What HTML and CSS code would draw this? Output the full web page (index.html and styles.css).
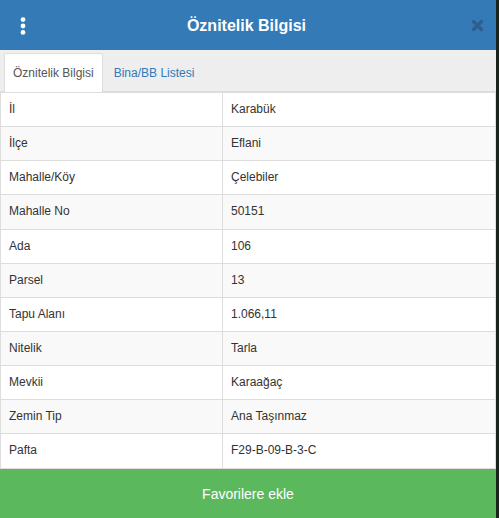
FILE: index.html
```html
<!DOCTYPE html>
<html lang="tr">
<head>
<meta charset="utf-8">
<title>Öznitelik Bilgisi</title>
<link rel="stylesheet" href="styles.css">
</head>
<body>
<div class="panel">
  <div class="header">
    <span class="menu">
      <svg width="8" height="18" viewBox="0 0 8 18"><circle cx="4" cy="2.6" r="2.4" fill="#fff"/><circle cx="4" cy="9" r="2.4" fill="#fff"/><circle cx="4" cy="15.4" r="2.4" fill="#fff"/></svg>
    </span>
    <h4 class="title">Öznitelik Bilgisi</h4>
    <span class="close">
      <svg width="13" height="13" viewBox="0 0 13 13"><path d="M2.5 2.5 L10.5 10.5 M10.5 2.5 L2.5 10.5" stroke="#2d5f8e" stroke-width="3.2" stroke-linecap="round"/></svg>
    </span>
  </div>
  <div class="tabs">
    <div class="tab active">Öznitelik Bilgisi</div>
    <div class="tab">Bina/BB Listesi</div>
  </div>
  <table class="attrs">
    <tbody>
      <tr><td class="key">İl</td><td>Karabük</td></tr>
      <tr><td class="key">İlçe</td><td>Eflani</td></tr>
      <tr><td class="key">Mahalle/Köy</td><td>Çelebiler</td></tr>
      <tr><td class="key">Mahalle No</td><td>50151</td></tr>
      <tr><td class="key">Ada</td><td>106</td></tr>
      <tr><td class="key">Parsel</td><td>13</td></tr>
      <tr><td class="key">Tapu Alanı</td><td>1.066,11</td></tr>
      <tr><td class="key">Nitelik</td><td>Tarla</td></tr>
      <tr><td class="key">Mevkii</td><td>Karaağaç</td></tr>
      <tr><td class="key">Zemin Tip</td><td>Ana Taşınmaz</td></tr>
      <tr><td class="key">Pafta</td><td>F29-B-09-B-3-C</td></tr>
    </tbody>
  </table>
  <button class="fav">Favorilere ekle</button>
</div>
</body>
</html>
```

FILE: styles.css
```css
html, body {
  margin: 0;
  padding: 0;
}
body {
  background: #1b231d;
  font-family: "Liberation Sans", Arial, sans-serif;
  font-size: 12px;
  color: #333;
  width: 499px;
  height: 518px;
  overflow: hidden;
}
.panel {
  width: 496px;
  background: #fff;
}
.header {
  height: 50px;
  background: #337ab7;
  display: flex;
  align-items: center;
}
.menu {
  width: 8px;
  margin-left: 19px;
  display: flex;
  align-items: center;
  margin-top: 1px;
}
.title {
  flex: 1;
  margin: 2px 0 0 0;
  padding-right: 5px;
  text-align: center;
  color: #fff;
  font-size: 16px;
  font-weight: bold;
}
.close {
  width: 13px;
  height: 13px;
  margin-right: 12px;
  display: flex;
}
.tabs {
  background: #eee;
  height: 38px;
  padding: 3px 0 0 4px;
  border-bottom: 1px solid #ddd;
  display: flex;
  align-items: flex-end;
  gap: 2px;
}
.tab {
  height: 39px;
  line-height: 38px;
  padding: 0 8px;
  border: 1px solid transparent;
  border-bottom: none;
  color: #337ab7;
  margin-bottom: -1px;
  box-sizing: border-box;
}
.tab.active {
  background: #fff;
  border-color: #ddd;
  color: #555;
  border-radius: 2px 2px 0 0;
}
.attrs {
  width: 496px;
  border-collapse: collapse;
  border: 1px solid #ddd;
}
.attrs td {
  border: 1px solid #ddd;
  padding: 8px;
  line-height: 1.42857;
  font-size: 12px;
  color: #333;
}
.attrs td.key {
  width: 205px;
  border-left: none;
}
.attrs tr:nth-child(even) td {
  background: #f9f9f9;
}
.fav {
  display: block;
  width: 496px;
  height: 50px;
  border: none;
  background: #5cb85c;
  color: #fff;
  font-family: "Liberation Sans", Arial, sans-serif;
  font-size: 14px;
  padding: 0;
  margin: 0;
}
```
